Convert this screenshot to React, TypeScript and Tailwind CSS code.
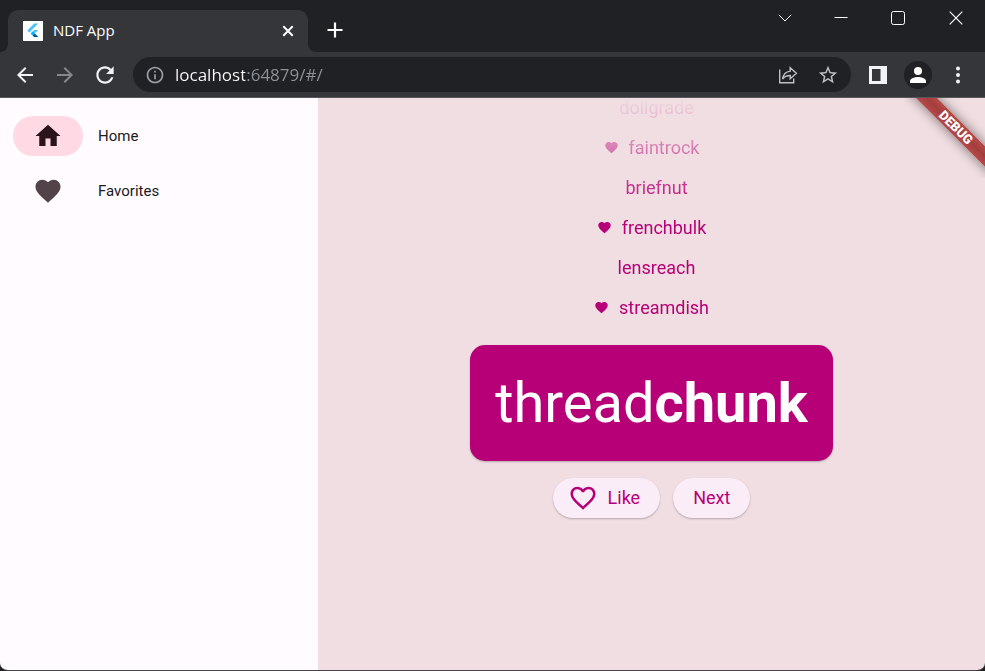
import type { ReactNode } from "react";

const HEART =
  "M12 21.35l-1.45-1.32C5.4 15.36 2 12.28 2 8.5 2 5.42 4.42 3 7.5 3c1.74 0 3.41.81 4.5 2.09C13.09 3.81 14.76 3 16.5 3 19.58 3 22 5.42 22 8.5c0 3.78-3.4 6.86-8.55 11.54L12 21.35z";
const HEART_OUTLINE =
  "M16.5 3c-1.74 0-3.41.81-4.5 2.09C10.91 3.81 9.24 3 7.5 3 4.42 3 2 5.42 2 8.5c0 3.78 3.4 6.86 8.55 11.54L12 21.35l1.45-1.32C18.6 15.36 22 12.28 22 8.5 22 5.42 19.58 3 16.5 3zm-4.4 15.55l-.1.1-.1-.1C7.14 14.24 4 11.39 4 8.5 4 6.5 5.5 5 7.5 5c1.54 0 3.04.99 3.57 2.36h1.87C13.46 5.99 14.96 5 16.5 5c2 0 3.5 1.5 3.5 3.5 0 2.89-3.14 5.74-7.9 10.05z";
const HOME = "M10 20v-6h4v6h5v-8h3L12 3 2 12h3v8z";
const BACK = "M20 11H7.83l5.59-5.59L12 4l-8 8 8 8 1.41-1.41L7.83 13H20v-2z";
const FORWARD = "M12 4l-1.41 1.41L16.17 11H4v2h12.17l-5.58 5.59L12 20l8-8z";
const RELOAD =
  "M17.65 6.35C16.2 4.9 14.21 4 12 4c-4.42 0-7.99 3.58-7.99 8s3.57 8 7.99 8c3.73 0 6.84-2.55 7.73-6h-2.08c-.82 2.33-3.04 4-5.65 4-3.31 0-6-2.69-6-6s2.69-6 6-6c1.66 0 3.14.69 4.22 1.78L13 11h7V4l-2.35 2.35z";
const INFO =
  "M11 7h2v2h-2zm0 4h2v6h-2zm1-9C6.48 2 2 6.48 2 12s4.48 10 10 10 10-4.48 10-10S17.52 2 12 2zm0 18c-4.41 0-8-3.59-8-8s3.59-8 8-8 8 3.59 8 8-3.59 8-8 8z";
const STAR =
  "M22 9.24l-7.19-.62L12 2 9.19 8.63 2 9.24l5.46 4.73L5.82 21 12 17.27 18.18 21l-1.63-7.03L22 9.24zM12 15.4l-3.76 2.27 1-4.28-3.32-2.88 4.38-.38L12 6.1l1.71 4.04 4.38.38-3.32 2.88 1 4.28L12 15.4z";

function Glyph({ d, className }: { d: string; className: string }) {
  return (
    <svg viewBox="0 0 24 24" fill="currentColor" aria-hidden="true" className={className}>
      <path d={d} />
    </svg>
  );
}

function IconButton({ label, className, children }: { label: string; className: string; children: ReactNode }) {
  return (
    <button type="button" aria-label={label} className={`flex shrink-0 items-center justify-center ${className}`}>
      {children}
    </button>
  );
}

function FlutterLogo() {
  return (
    <svg viewBox="0 0 20 20" aria-hidden="true" className="size-5 shrink-0">
      <rect width="20" height="20" fill="#fff" />
      <path d="M11.2 2.5h4L6.3 11.4 4.3 9.4z" fill="#47c5fb" />
      <path d="M11.2 9h4l-3.5 3.5 3.5 3.5h-4l-3.5-3.5z" fill="#47c5fb" />
      <path d="M9.7 14.5l2-2 3.5 3.5h-4z" fill="#00569e" />
      <path d="M7.7 12.5l2-2 2 2-2 2z" fill="#00b5f8" />
    </svg>
  );
}

function TabStrip() {
  return (
    <header className="flex h-[52px] shrink-0 bg-[#202124] text-white">
      <div className="flex items-end">
        <div className="size-2 bg-[#35363a]">
          <div className="size-2 rounded-br-lg bg-[#202124]" />
        </div>
        <div className="flex h-[42px] w-[300px] items-center rounded-t-[10px] bg-[#35363a] pl-[15px] pr-3">
          <FlutterLogo />
          <span className="ml-2.5 flex-1 pb-0.5 text-[15px] leading-5">NDF App</span>
          <IconButton label="Close tab" className="size-4">
            <svg viewBox="0 0 16 16" className="size-4" stroke="currentColor" strokeWidth="2">
              <path d="M3.3 3.3l9.4 9.4M12.7 3.3l-9.4 9.4" />
            </svg>
          </IconButton>
        </div>
        <div className="size-2 bg-[#35363a]">
          <div className="size-2 rounded-bl-lg bg-[#202124]" />
        </div>
      </div>
      <IconButton label="New tab" className="mt-2.5 ml-[3px] h-10 w-8">
        <svg viewBox="0 0 16 16" className="size-4" stroke="currentColor" strokeWidth="2.2">
          <path d="M8 0.5v15M0.5 8h15" />
        </svg>
      </IconButton>
      <div className="ml-auto flex h-9">
        <IconButton label="Search tabs" className="w-14">
          <svg viewBox="0 0 14 14" className="size-3.5" fill="none" stroke="currentColor">
            <path d="M0.8 3.8L7 10l6.2-6.2" />
          </svg>
        </IconButton>
        <IconButton label="Minimize" className="w-14">
          <svg viewBox="0 0 14 14" className="size-3.5" stroke="currentColor">
            <path d="M0.5 6.5h13" />
          </svg>
        </IconButton>
        <IconButton label="Maximize" className="w-[58px]">
          <svg viewBox="0 0 14 14" className="size-3.5" fill="none" stroke="currentColor">
            <rect x="0.5" y="0.5" width="13" height="13" rx="2" />
          </svg>
        </IconButton>
        <IconButton label="Close" className="w-[58px]">
          <svg viewBox="0 0 14 14" className="size-3.5" stroke="currentColor" strokeWidth="1.2">
            <path d="M0.7 0.7l12.6 12.6M13.3 0.7L0.7 13.3" />
          </svg>
        </IconButton>
      </div>
    </header>
  );
}

function Toolbar() {
  return (
    <div className="flex h-[46px] shrink-0 items-center border-b border-[#56575a] bg-[#35363a] pl-[5px] pr-[7px] text-[#f1f3f4]">
      <IconButton label="Back" className="size-10">
        <Glyph d={BACK} className="size-6" />
      </IconButton>
      <IconButton label="Forward" className="size-10 text-[#86878a]">
        <Glyph d={FORWARD} className="size-6" />
      </IconButton>
      <IconButton label="Reload" className="size-10">
        <Glyph d={RELOAD} className="size-[26px]" />
      </IconButton>
      <div className="ml-2 flex h-[35px] min-w-0 flex-1 items-center rounded-full bg-[#202124] pl-3 pr-[3px] text-[#bdc1c6]">
        <Glyph d={INFO} className="size-5 shrink-0 text-[#9aa0a6]" />
        <input
          type="text"
          aria-label="Address"
          defaultValue="localhost:64879/#/"
          className="ml-2.5 min-w-0 flex-1 bg-[linear-gradient(to_right,#ffffff_70px,#8f9397_70px)] bg-clip-text text-[17px] leading-6 text-transparent outline-none"
        />
        <IconButton label="Share this page" className="size-10">
          <svg viewBox="0 0 20 20" className="size-5" fill="none" stroke="currentColor" strokeWidth="1.4">
            <path d="M1.7 4.5v13.3h14v-4.3" />
            <path d="M12.2 2.7l6.2 5.6-6.2 5.4v-3.2c-3.6 0-6 1.2-7.6 3.6.5-4 2.9-7.4 7.6-8z" />
          </svg>
        </IconButton>
        <IconButton label="Bookmark this tab" className="size-10">
          <Glyph d={STAR} className="size-[22px]" />
        </IconButton>
      </div>
      <IconButton label="Side panel" className="ml-[7px] size-10">
        <svg viewBox="0 0 18 18" className="size-[18px]" aria-hidden="true">
          <path fill="currentColor" fillRule="evenodd" d="M0 0h18v18H0zM3 3v12h8.5V3z" />
        </svg>
      </IconButton>
      <IconButton label="Profile" className="size-10">
        <span className="flex size-7 items-center justify-center rounded-full bg-[#202124]">
          <svg viewBox="0 0 16 16" className="size-4" fill="#fff" aria-hidden="true">
            <circle cx="8" cy="4" r="4" />
            <path d="M0 16v-2c0-2.7 5.3-4 8-4s8 1.3 8 4v2z" />
          </svg>
        </span>
      </IconButton>
      <IconButton label="Menu" className="size-10">
        <svg viewBox="0 0 4 18" className="h-[18px] w-1" fill="currentColor" aria-hidden="true">
          <circle cx="2" cy="2.5" r="2" />
          <circle cx="2" cy="9" r="2" />
          <circle cx="2" cy="15.5" r="2" />
        </svg>
      </IconButton>
    </div>
  );
}

function NavItem({ icon, label, selected = false }: { icon: string; label: string; selected?: boolean }) {
  return (
    <button type="button" aria-pressed={selected} className="flex items-center gap-[15px] text-left text-[15px] leading-5 text-[#201a1b]">
      <span
        className={
          selected
            ? "flex h-10 w-[70px] items-center justify-center rounded-full bg-[#ffd9e4] text-[#2b151d]"
            : "flex h-10 w-[70px] items-center justify-center rounded-full text-[#514347]"
        }
      >
        <Glyph d={icon} className="size-[30px]" />
      </span>
      {label}
    </button>
  );
}

function NavRail() {
  return (
    <nav className="flex w-[318px] shrink-0 flex-col gap-[15px] bg-[#fffbff] px-[13px] pt-[18px]">
      <NavItem icon={HOME} label="Home" selected />
      <NavItem icon={HEART} label="Favorites" />
    </nav>
  );
}

const HISTORY = [
  { word: "dollgrade", liked: false },
  { word: "faintrock", liked: true },
  { word: "briefnut", liked: false },
  { word: "frenchbulk", liked: true },
  { word: "lensreach", liked: false },
  { word: "streamdish", liked: true },
];

function HistoryList() {
  return (
    <ul className="flex min-h-0 w-full flex-[3_3_1px] flex-col items-center justify-end overflow-hidden [mask-image:linear-gradient(to_bottom,transparent,black_50%)]">
      {HISTORY.map(({ word, liked }) => (
        <li key={word} className="shrink-0">
          <button type="button" className="flex h-10 items-center gap-2.5 text-lg leading-5">
            {liked ? <Glyph d={HEART} className="size-[15px]" /> : <span />}
            {word}
          </button>
        </li>
      ))}
    </ul>
  );
}

function DebugBanner() {
  return (
    <div className="pointer-events-none absolute top-0 right-0 size-20 overflow-hidden">
      <div className="absolute top-[22px] -right-[31px] flex h-[15px] w-[120px] rotate-45 items-center justify-center bg-linear-to-b from-[#b44b4b] via-[#a63d3d] to-[#b44b4b] font-black text-[13px] leading-none text-white shadow-[0_0_12px_rgba(0,0,0,0.5)]">
        DEBUG
      </div>
    </div>
  );
}

function GeneratorPage() {
  return (
    <main className="relative flex min-w-0 flex-1 flex-col items-center overflow-hidden bg-[#f0dee2] text-[#b70077]">
      <HistoryList />
      <h1 className="my-[17px] rounded-[15px] bg-[#b70077] p-[25px] text-[56px] leading-[66px] text-white shadow-[0_1px_2px_rgba(0,0,0,0.25)]">
        thread<span className="font-bold">chunk</span>
      </h1>
      <div className="flex gap-[13px] text-lg">
        <button type="button" className="flex h-10 items-center gap-2.5 rounded-full bg-[#fbedf7] pl-[15px] pr-5 shadow-[0_1px_2px_rgba(0,0,0,0.25)]">
          <Glyph d={HEART_OUTLINE} className="size-[30px]" />
          Like
        </button>
        <button type="button" className="h-10 rounded-full bg-[#fbedf7] px-5 shadow-[0_1px_2px_rgba(0,0,0,0.25)]">
          Next
        </button>
      </div>
      <div className="flex-[2]" />
      <DebugBanner />
    </main>
  );
}

export default function App() {
  return (
    <div className="h-screen bg-[#202124]">
      <div className="flex h-full flex-col overflow-hidden rounded-b-lg border-b border-[#454547]">
        <div className="flex shrink-0 flex-col font-['Open_Sans','Noto_Sans',sans-serif]">
          <TabStrip />
          <Toolbar />
        </div>
        <div className="flex min-h-0 flex-1 font-[Roboto,sans-serif]">
          <NavRail />
          <GeneratorPage />
        </div>
      </div>
    </div>
  );
}
